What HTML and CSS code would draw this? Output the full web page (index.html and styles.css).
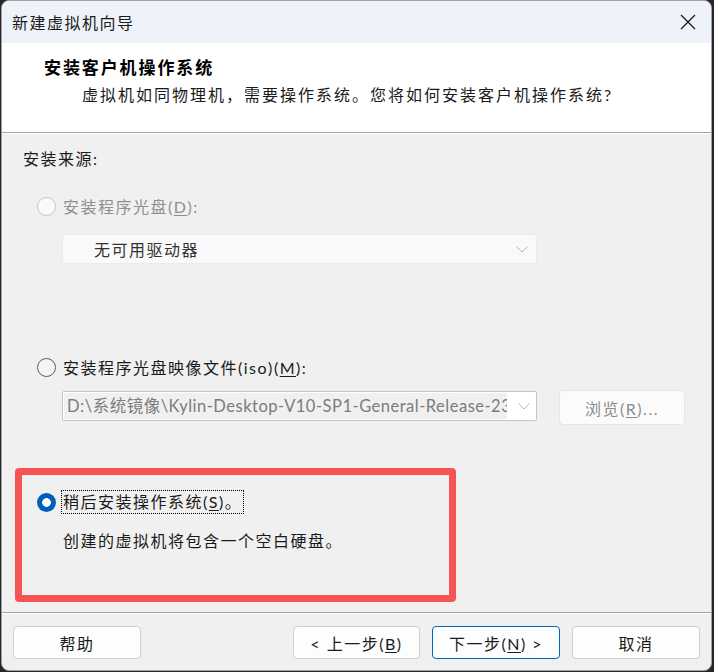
FILE: index.html
```html
<!DOCTYPE html>
<html lang="zh-CN">
<head>
    <meta charset="UTF-8">
    <title>新建虚拟机向导</title>
    <link rel="stylesheet" href="styles.css">
</head>
<body>
    <div class="window">
        <div class="titlebar">
            <span class="title">新建虚拟机向导</span>
            <svg class="close" width="16" height="16" viewBox="0 0 16 16">
                <path d="M1 1 L15 15 M15 1 L1 15" stroke="#1a1a1a" stroke-width="1.3" fill="none"/>
            </svg>
        </div>

        <div class="header">
            <h1>安装客户机操作系统</h1>
            <p>虚拟机如同物理机，需要操作系统。您将如何安装客户机操作系统?</p>
        </div>

        <div class="content">
            <div class="section-label">安装来源:</div>

            <div class="option disabled cd-option">
                <span class="radio"></span>
                <span class="label">安装程序光盘(<u>D</u>):</span>
            </div>
            <div class="select disabled">
                <span>无可用驱动器</span>
                <svg class="chevron" width="12" height="7" viewBox="0 0 12 7">
                    <path d="M0.5 0.5 L6 6 L11.5 0.5" stroke="#b4b4b4" stroke-width="1" fill="none"/>
                </svg>
            </div>

            <div class="option iso-option">
                <span class="radio"></span>
                <span class="label">安装程序光盘映像文件(iso)(<u>M</u>):</span>
            </div>
            <div class="iso-row">
                <div class="combo">
                    <div class="combo-text">D:\系统镜像\Kylin-Desktop-V10-SP1-General-Release-23</div>
                    <div class="combo-arrow">
                        <svg width="12" height="7" viewBox="0 0 12 7">
                            <path d="M0.5 0.5 L6 6 L11.5 0.5" stroke="#b4b4b4" stroke-width="1" fill="none"/>
                        </svg>
                    </div>
                </div>
                <button class="browse">浏览(<u>R</u>)...</button>
            </div>

            <div class="later-box">
                <div class="option">
                    <span class="radio checked"></span>
                    <span class="label focused">稍后安装操作系统(<u>S</u>)。</span>
                </div>
                <div class="note">创建的虚拟机将包含一个空白硬盘。</div>
            </div>
        </div>

        <div class="footer">
            <button class="btn">帮助</button>
            <div class="nav">
                <button class="btn btn-prev">&lt; 上一步(<u>B</u>)</button>
                <button class="btn btn-next">下一步(<u>N</u>) &gt;</button>
                <button class="btn">取消</button>
            </div>
        </div>
    </div>
</body>
</html>
```

FILE: styles.css
```css
* {
    box-sizing: border-box;
}
html, body {
    margin: 0;
    padding: 0;
}
body {
    width: 714px;
    height: 672px;
    overflow: hidden;
    background-color: #262626;
    font-family: Lato, "Noto Sans CJK SC", sans-serif;
    font-size: 16px;
    letter-spacing: 1.5px;
    color: #1a1a1a;
}
u {
    text-decoration-thickness: 1px;
    text-underline-offset: 2px;
}

/* ikkuna */
.window {
    margin-left: 1px;
    width: 711px;
    height: 671px;
    border: 1px solid #a3a3a3;
    border-radius: 8px;
    background-color: #f0f0f0;
    overflow: hidden;
    display: flex;
    flex-direction: column;
}
.titlebar {
    height: 42px;
    flex: none;
    display: flex;
    align-items: center;
    justify-content: space-between;
    padding: 0 15px 0 10px;
    background-color: #eef2f9;
}
.title {
    color: #1b1b1b;
}

/* otsikko */
.header {
    height: 90px;
    flex: none;
    background-color: #ffffff;
    border-bottom: 1px solid #a0a0a0;
    padding-top: 13px;
}
.header h1 {
    margin: 0;
    padding-left: 42px;
    font-size: 17px;
    font-weight: bold;
    letter-spacing: 1.9px;
    line-height: 24px;
    color: #000;
}
.header p {
    margin: 3px 0 0;
    padding-left: 80px;
    line-height: 24px;
    letter-spacing: 2px;
    color: #1a1a1a;
}

/* sisältö */
.content {
    height: 479px;
    flex: none;
    padding: 14px 0 0 13px;
    box-shadow: inset 0 1px 0 #ffffff;
}
.section-label {
    margin-left: 8px;
    line-height: 24px;
}
.option {
    display: flex;
    align-items: center;
    height: 24px;
    padding-left: 22px;
}
.cd-option {
    margin-top: 23px;
}
.iso-option {
    margin-top: 91px;
}
.radio {
    width: 19px;
    height: 19px;
    flex: none;
    border-radius: 50%;
    border: 1.5px solid #5c5c5c;
    background-color: #f4f4f4;
    margin-right: 7px;
}
.disabled .radio {
    border: 1px solid #c6c6c6;
    background-color: #fafafa;
}
.disabled .label {
    color: #8f8f8f;
}
.radio.checked {
    border: none;
    background: radial-gradient(circle, #ffffff 0, #ffffff 4px, #005fb8 4.6px);
    margin-right: 5px;
}
.label.focused {
    border: 1px dotted #000;
    padding: 0 1px;
    line-height: 22px;
}

.select {
    margin: 16px 0 0 47px;
    width: 475px;
    height: 30px;
    display: flex;
    align-items: center;
    justify-content: space-between;
    padding: 0 8px 0 31px;
    background-color: #f9f9f9;
    border: 1px solid #ebebeb;
    border-radius: 2px;
    color: #333;
}
.chevron {
    display: block;
}

.iso-row {
    margin: 11px 0 0 47px;
    display: flex;
    align-items: flex-start;
}
.combo {
    margin-top: 1px;
    width: 475px;
    height: 30px;
    display: flex;
    background-color: #ffffff;
    border: 1px solid #c5c5c5;
    border-radius: 2px;
}
.combo-text {
    flex: 1;
    margin: 1px;
    padding-left: 3px;
    background-color: #f0f0f0;
    color: #7c7c7c;
    font-size: 16.5px;
    letter-spacing: 0.5px;
    line-height: 26px;
    white-space: nowrap;
    overflow: hidden;
}
.combo-arrow {
    width: 28px;
    flex: none;
    display: flex;
    align-items: center;
    padding-left: 10px;
}
.combo-arrow svg {
    display: block;
}
.browse {
    margin-left: 22px;
    width: 126px;
    height: 35px;
    background-color: #fbfbfb;
    border: 1px solid #e6e6e6;
    border-radius: 4px;
    color: #8c8c8c;
    font: inherit;
    letter-spacing: inherit;
    padding: 0;
}

/* punainen korostus */
.later-box {
    margin-top: 43px;
    width: 441px;
    height: 134px;
    border: 7px solid #f65454;
    border-radius: 4px;
    padding: 15px 0 0 15px;
}
.later-box .option {
    padding-left: 0;
}
.note {
    margin-top: 15px;
    padding-left: 26px;
    line-height: 24px;
}

/* alapalkki */
.footer {
    flex: 1;
    display: flex;
    justify-content: space-between;
    padding: 13px 11px 0 11px;
    border-top: 1px solid #a0a0a0;
    box-shadow: inset 0 1px 0 #ffffff;
}
.nav {
    display: flex;
    gap: 12px;
}
.btn {
    width: 128px;
    height: 33px;
    padding: 0;
    background-color: #fdfdfd;
    border: 1px solid #d0d0d0;
    border-radius: 4px;
    font: inherit;
    letter-spacing: inherit;
    color: #1a1a1a;
}
.btn-prev {
    width: 127px;
}
.btn-next {
    border-color: #0067c0;
}
```
